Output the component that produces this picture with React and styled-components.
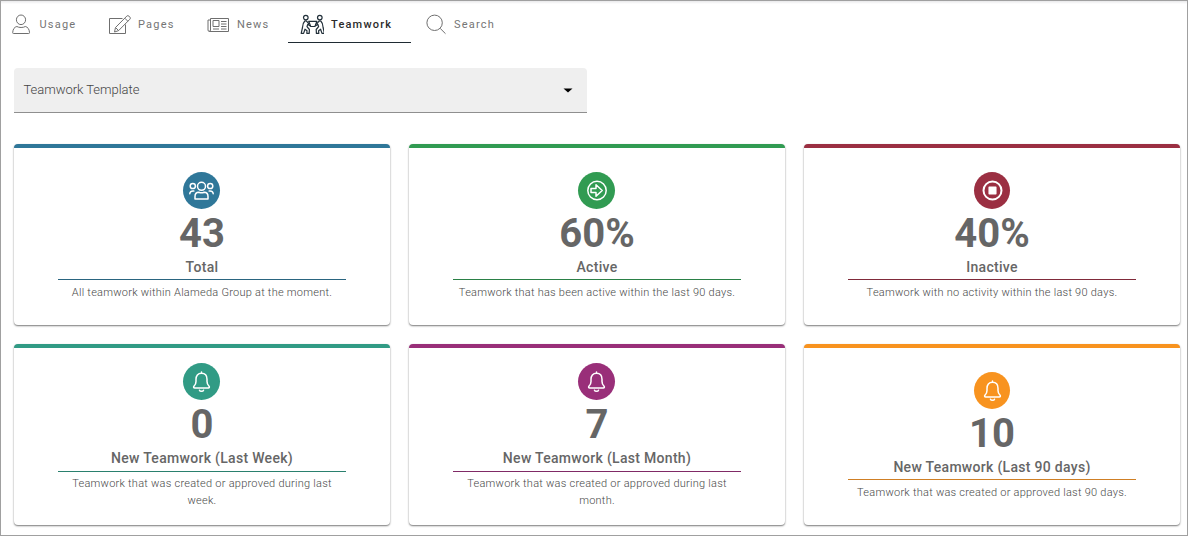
import React from "react";
import styled, { createGlobalStyle } from "styled-components";

const GlobalStyle = createGlobalStyle`
  *, *::before, *::after { box-sizing: border-box; }
  body { margin: 0; background: #fff; font-family: Roboto, "Liberation Sans", sans-serif; }
`;

const Frame = styled.div`
  width: 1188px;
  height: 536px;
  border: 1px solid #a0a0a0;
  overflow: hidden;
  background: linear-gradient(#e9e9eb, #fff 3px);
`;

const Tabs = styled.nav`
  display: flex;
  height: 42px;
  margin-left: -4.5px;
`;

const Tab = styled.a`
  display: flex;
  align-items: center;
  width: ${(p) => p.$width}px;
  padding: 4px 0 0 12px;
  gap: 7px;
  border-bottom: 1px solid ${(p) => (p.$active ? "#1f2b33" : "transparent")};
  color: ${(p) => (p.$active ? "#2b2b2b" : "#757575")};
  font-size: 11px;
  font-weight: ${(p) => (p.$active ? 500 : 400)};
  letter-spacing: 1.2px;
  white-space: nowrap;
`;

const TabLabel = styled.span`
  padding-top: 2px;
`;

const TabIcon = styled.svg`
  flex: none;
  width: 24px;
  height: 24px;
  fill: none;
  stroke: ${(p) => (p.$active ? "#22303a" : "#6f6f6f")};
  stroke-width: ${(p) => (p.$active ? 1.2 : 1)};
  stroke-linejoin: round;
`;

const Select = styled.div`
  display: flex;
  align-items: center;
  justify-content: space-between;
  width: 573px;
  height: 45px;
  margin: 25px 0 0 13px;
  padding: 0 14px 1px 9.5px;
  border-bottom: 1px solid #8f8f8f;
  border-radius: 4px 4px 0 0;
  background: #efefef;
  color: #444;
  font-size: 13px;
  font-weight: 300;
  letter-spacing: -0.04px;
`;

const Caret = styled.svg`
  width: 10px;
  height: 5px;
  margin-top: 2px;
  fill: #000;
`;

const Grid = styled.main`
  display: grid;
  grid-template-columns: repeat(3, 376px);
  grid-auto-rows: 181px;
  gap: 19px;
  margin: 31px 0 0 13px;
`;

const Badge = styled.div`
  display: flex;
  justify-content: center;
  width: 37px;
  height: 37px;
  margin-right: 1px;
  border-radius: 50%;
  background: ${(p) => p.$color};
`;

const Card = styled.section`
  display: flex;
  flex-direction: column;
  align-items: center;
  justify-content: center;
  padding-bottom: 0.5px;
  border-top: 4px solid ${(p) => p.$color};
  border-radius: 4px;
  background: #fff;
  box-shadow: 0 1px 2px rgba(0, 0, 0, 0.45), 0 1px 1px rgba(0, 0, 0, 0.12);

  &:nth-child(3n) ${Badge} {
    width: 36px;
    margin-right: 0;
  }
`;

const BadgeIcon = styled.svg`
  flex: none;
  width: 37px;
  height: 37px;
  fill: none;
  stroke: #fff;
  stroke-width: 1.5;
  stroke-linecap: round;
  stroke-linejoin: round;
`;

const Figure = styled.div`
  height: 48px;
  color: #666;
  font-size: 40px;
  font-weight: 700;
  line-height: 50px;
`;

const Title = styled.h2`
  width: 288px;
  height: 23.6px;
  margin: 0;
  border-bottom: 1px solid ${(p) => p.$color};
  color: #666;
  font-size: 14px;
  font-weight: 500;
  letter-spacing: 0.3px;
  line-height: 20px;
  text-align: center;
`;

const Description = styled.p`
  width: 288px;
  margin: 3.4px 0 0;
  color: #484848;
  font-size: 11px;
  font-weight: 300;
  letter-spacing: 0.25px;
  line-height: 17px;
  text-align: center;
`;

const tabs = [
  {
    label: "Usage",
    width: 98.5,
    icon: (
      <>
        <ellipse cx="12" cy="7.800" rx="4.600" ry="4.800" />
        <path d="M4.500 21.500h15.200a.8.8 0 0 0 .8-.9c-.2-3.500-1.700-5.600-4.200-6.100-1 .6-2.400 1-4.200 1s-3.200-.4-4.200-1c-2.500.5-4 2.600-4.200 6.100a.8.8 0 0 0 .8.900z" />
      </>
    ),
  },
  {
    label: "Pages",
    width: 99,
    icon: (
      <>
        <path d="M15.500 6.500h-13v15h16v-9" />
        <path d="m7.500 20 1-4.500L19.800 4.100a1.500 1.500 0 0 1 2.100 0l1 1a1.500 1.500 0 0 1 0 2.100L11.600 18.600zM17.800 6.200l3 3M8.600 15.600l3 3" />
      </>
    ),
  },
  {
    label: "News",
    width: 94,
    icon: (
      <>
        <path d="M4.500 6.500h18v13h-19a1.500 1.500 0 0 1-1.500-1.500v-10h2.500M4.500 6.500v11.500a1.500 1.500 0 0 1-1.500 1.400" />
        <path d="M7 8.500h6v6H7zM15 9.500h5.500M15 12h5.500M15 14.500h5.500M7 17h6M15 17h5.500" />
      </>
    ),
  },
  {
    label: "Teamwork",
    width: 123,
    active: true,
    icon: (
      <>
        <circle cx="5.800" cy="5.600" r="2.300" />
        <circle cx="19.800" cy="5.600" r="2.300" />
        <path d="M8.700 9.300h8.200l-2 5.200h-4.200z" />
        <path d="M4.800 9c-1.600 1.600-2.300 4-2.300 6.500L1.200 21.400h2.400L5 17.200l2 1.500-.2 2.700h2.400l.2-3.900-2.400-2.800.7-2.400 2.600 1.700M4.800 9c1-.4 2 0 2.400.9l2 2.200" />
        <path d="M20.800 9c1.600 1.600 2.300 4 2.300 6.500l1.300 5.900H22l-1.400-4.200-2 1.500.2 2.700h-2.400l-.2-3.900 2.400-2.800-.7-2.400-2.600 1.700M20.800 9c-1-.4-2 0-2.400.9l-2 2.200" />
      </>
    ),
  },
  {
    label: "Search",
    width: 98,
    icon: (
      <>
        <circle cx="11.600" cy="10.800" r="7.700" />
        <path d="m17.200 16.400 5.300 5.300" />
      </>
    ),
  },
];

const GroupIcon = () => (
  <BadgeIcon viewBox="0 0 37 37">
    <circle cx="18.500" cy="14.300" r="4" />
    <path d="M12 27v-2.500c0-2.700 1.500-4.300 3.800-4.300 1.500.7 3.900.7 5.400 0 2.300 0 3.800 1.600 3.800 4.300V27z" />
    <circle cx="9.800" cy="14" r="2.600" />
    <circle cx="27.200" cy="14" r="2.600" />
    <path d="M6.800 21.800c0-2 1.300-3 4-2.700M30.200 21.800c0-2-1.300-3-4-2.700" />
  </BadgeIcon>
);

const ArrowIcon = () => (
  <BadgeIcon viewBox="0 0 37 37">
    <circle cx="19" cy="18.500" r="9.200" />
    <path d="M13 16.500h5v-3.800l6.200 5.800-6.200 5.800v-3.800h-5z" />
  </BadgeIcon>
);

const StopIcon = () => (
  <BadgeIcon viewBox="0 0 37 37">
    <circle cx="18.500" cy="18.500" r="9" strokeWidth="2" />
    <path d="M15.200 15.200h6.600v6.600h-6.600z" fill="#fff" />
  </BadgeIcon>
);

const BellIcon = () => (
  <BadgeIcon viewBox="0 0 37 37">
    <path d="M18.500 9v1.200M18.500 10.200c-3.700 0-5.500 2.700-5.500 6v2.300c0 2.200-.7 3.300-1.900 4.500-.9 1-.5 2 .7 2h13.400c1.200 0 1.600-1 .7-2-1.200-1.200-1.900-2.300-1.900-4.500v-2.300c0-3.300-1.800-6-5.500-6zM16.500 27.200c.5 1.500 3.500 1.500 4 0" />
  </BadgeIcon>
);

const cards = [
  { color: "#2f7799", line: "#2a6580", Icon: GroupIcon, value: "43", title: "Total", text: "All teamwork within Alameda Group at the moment." },
  { color: "#319b52", line: "#2a8046", Icon: ArrowIcon, value: "60%", title: "Active", text: "Teamwork that has been active within the last 90 days." },
  { color: "#9b2f42", line: "#802a3a", Icon: StopIcon, value: "40%", title: "Inactive", text: "Teamwork with no activity within the last 90 days." },
  { color: "#319b85", line: "#2a806e", Icon: BellIcon, value: "0", title: "New Teamwork (Last Week)", text: "Teamwork that was created or approved during last week." },
  { color: "#992f79", line: "#802a66", Icon: BellIcon, value: "7", title: "New Teamwork (Last Month)", text: "Teamwork that was created or approved during last month." },
  { color: "#f8931f", line: "#cf7f25", Icon: BellIcon, value: "10", title: "New Teamwork (Last 90 days)", text: "Teamwork that was created or approved last 90 days." },
];

export default function App() {
  return (
    <Frame>
      <GlobalStyle />
      <Tabs>
        {tabs.map((t) => (
          <Tab key={t.label} $active={t.active} $width={t.width}>
            <TabIcon viewBox="0 0 24 24" $active={t.active}>{t.icon}</TabIcon>
            <TabLabel>{t.label}</TabLabel>
          </Tab>
        ))}
      </Tabs>
      <Select>
        Teamwork Template
        <Caret viewBox="0 0 10 5"><path d="M.5.500h9L5 4.500z" /></Caret>
      </Select>
      <Grid>
        {cards.map(({ color, line, Icon, value, title, text }) => (
          <Card key={title} $color={color}>
            <Badge $color={color}><Icon /></Badge>
            <Figure>{value}</Figure>
            <Title $color={line}>{title}</Title>
            <Description>{text}</Description>
          </Card>
        ))}
      </Grid>
    </Frame>
  );
}
